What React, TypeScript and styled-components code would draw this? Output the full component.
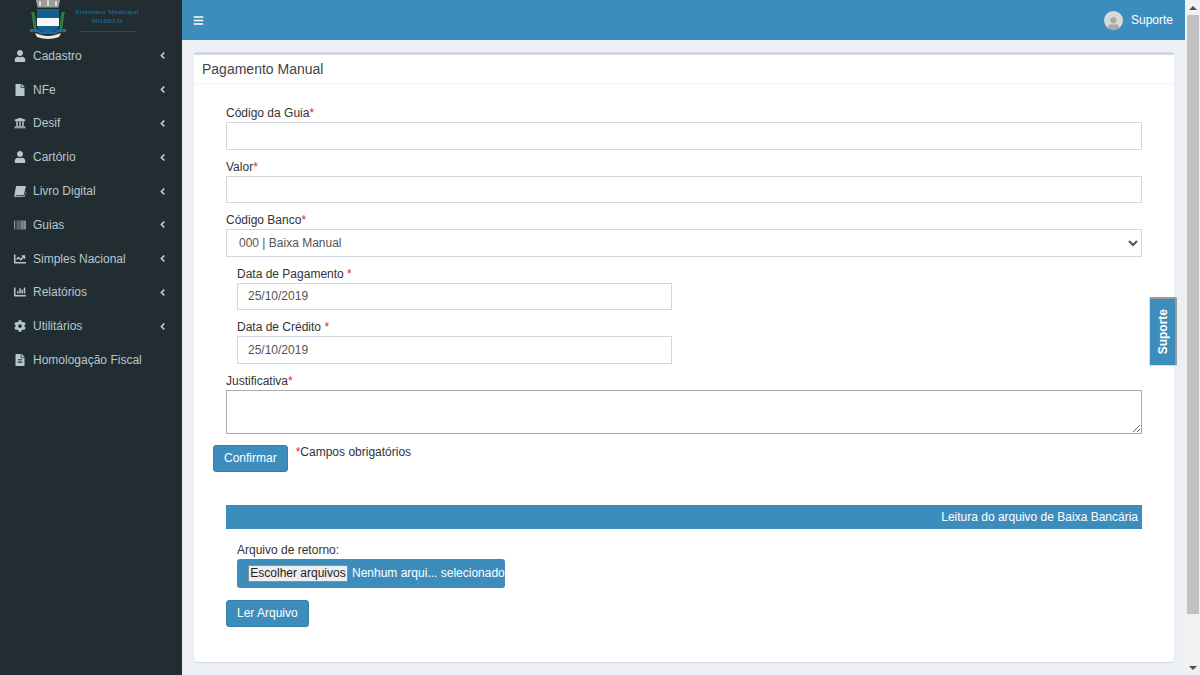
import React from "react";
import styled, { createGlobalStyle } from "styled-components";
import {
  FaAngleLeft,
  FaBarcode,
  FaBars,
  FaChartBar,
  FaChartLine,
  FaCog,
  FaFile,
  FaFileAlt,
  FaUniversity,
  FaUser,
} from "react-icons/fa";

const GlobalStyle = createGlobalStyle`
  html, body {
    margin: 0;
    height: 100%;
    overflow: hidden;
  }

  body {
    font-family: "Liberation Sans", Arial, sans-serif;
    font-size: 12px;
    color: #333;
  }

  * {
    box-sizing: border-box;
  }
`;

const Page = styled.div`
  display: flex;
  width: 1200px;
  height: 675px;
  overflow: hidden;
  background: #ecf0f5;
`;

const Sidebar = styled.aside`
  flex: 0 0 182px;
  background: #222d32;
`;

const Brand = styled.div`
  display: flex;
  height: 39px;
  padding-left: 30px;
  overflow: hidden;
`;

const BrandText = styled.div`
  display: flex;
  flex-direction: column;
  align-items: center;
  width: 72px;
  margin-left: 5px;
  padding-top: 7px;
  font-family: "Liberation Serif", serif;
  font-size: 6.5px;
  line-height: 9px;
  font-weight: 700;
  letter-spacing: 0.25px;
  white-space: nowrap;
  color: #0f6797;
`;

const BrandRule = styled.div`
  width: 55px;
  margin-top: 6px;
  border-top: 1px dotted #17709f;
`;

const Menu = styled.ul`
  margin: 0;
  padding: 0;
  list-style: none;
`;

const MenuItem = styled.li`
  display: flex;
  align-items: center;
  height: 33.8px;
  padding-left: 14px;
  padding-right: 14px;
  color: #b8c7ce;
  font-size: 12px;
`;

const MenuIcon = styled.span`
  display: flex;
  justify-content: center;
  align-items: center;
  flex: 0 0 12px;
  margin-right: 7px;
  font-size: 12px;
`;

const MenuLabel = styled.span`
  flex: 1;
`;

const Main = styled.div`
  flex: 1;
  display: flex;
  flex-direction: column;
  min-width: 0;
`;

const TopBar = styled.header`
  display: flex;
  align-items: center;
  justify-content: space-between;
  flex: 0 0 40px;
  padding: 0 12px 0 11px;
  background: #3c8dbc;
  color: #fff;
`;

const UserMenu = styled.div`
  display: flex;
  align-items: center;
  gap: 8px;
  font-size: 12px;
`;

const Avatar = styled.span`
  display: flex;
  align-items: flex-end;
  justify-content: center;
  width: 19px;
  height: 19px;
  border-radius: 50%;
  overflow: hidden;
  background: #d9d9d9;
  color: #a9a9a9;
`;

const Content = styled.main`
  flex: 1;
  padding: 12px 11px 13px 12px;
`;

const Box = styled.section`
  height: 100%;
  background: #fff;
  border-top: 3px solid #d2d6de;
  border-radius: 3px;
  box-shadow: 0 1px 1px rgba(0, 0, 0, 0.1);
`;

const BoxHeader = styled.h1`
  margin: 0;
  height: 29px;
  padding: 5px 8px 0;
  border-bottom: 1px solid #f4f4f4;
  font-size: 14px;
  line-height: 18px;
  font-weight: 400;
  color: #444;
`;

const Form = styled.form`
  padding: 21px 32px 0 32px;
`;

const Field = styled.div<{ $inset?: boolean; $narrow?: boolean }>`
  margin-bottom: 9px;
  margin-left: ${(p) => (p.$inset ? "11px" : "0")};
  width: ${(p) => (p.$narrow ? "435px" : "916px")};
`;

const Label = styled.label`
  display: block;
  height: 17px;
  line-height: 17px;
  color: #333;
`;

const Required = styled.span`
  color: #e0252b;
`;

const TextInput = styled.input`
  display: block;
  width: 100%;
  height: 27.5px;
  padding: 0 10px;
  border: 1px solid #d2d6de;
  background: #fff;
  font: 12px "Liberation Sans", Arial, sans-serif;
  color: #555;
  outline: none;
`;

const Select = styled.select`
  display: block;
  width: 100%;
  height: 27.5px;
  padding: 0 8px;
  border: 1px solid #d2d6de;
  background: #fff;
  font: 12px "Liberation Sans", Arial, sans-serif;
  color: #555;
  outline: none;
`;

const TextArea = styled.textarea`
  display: block;
  width: 100%;
  height: 44px;
  border: 1px solid #a9a9a9;
  background: #fff;
  outline: none;
`;

const Actions = styled.div`
  display: flex;
  align-items: flex-start;
  gap: 8px;
  margin: 11px 0 0 -13px;
`;

const Button = styled.button`
  height: 27px;
  padding: 0 10px;
  border: 1px solid #367fa9;
  border-radius: 3px;
  background: #3c8dbc;
  color: #fff;
  font: 12px "Liberation Sans", Arial, sans-serif;
`;

const RequiredNote = styled.span`
  padding-top: 0;
  line-height: 14px;
`;

const SectionBar = styled.div`
  width: 916px;
  height: 24px;
  margin-top: 33px;
  padding-right: 4px;
  background: #3c8dbc;
  color: #fff;
  text-align: right;
  font-size: 12px;
  line-height: 25px;
`;

const UploadBlock = styled.div`
  margin: 13px 0 12px 11px;
`;

const UploadBox = styled.div`
  display: flex;
  align-items: center;
  gap: 4px;
  width: 268px;
  height: 29px;
  padding-left: 11px;
  border-radius: 3px;
  background: #3c8dbc;
  color: #fff;
  font-size: 12px;
  white-space: nowrap;
`;

const FileButton = styled.span`
  display: inline-flex;
  align-items: center;
  justify-content: center;
  width: 100px;
  height: 17px;
  border: 1px solid #8f8f8f;
  border-radius: 1px;
  background: #efefef;
  color: #222;
`;

const SupportTab = styled.div`
  position: absolute;
  left: 1149px;
  top: 297px;
  display: flex;
  align-items: center;
  justify-content: center;
  width: 28px;
  height: 69px;
  border-top: 2px solid #999;
  border-right: 2px solid #999;
  border-bottom: 1px solid #ddd;
  border-left: 1px solid #ddd;
  border-radius: 2px;
  background: #3c8dbc;
  color: #fff;
  font-size: 12px;
  font-weight: 700;
`;

const SupportText = styled.span`
  writing-mode: vertical-rl;
  transform: rotate(180deg);
`;

const Scrollbar = styled.div`
  flex: 0 0 15px;
  display: flex;
  flex-direction: column;
  background: #f1f1f1;
`;

const ScrollArrow = styled.div<{ $down?: boolean }>`
  display: flex;
  align-items: center;
  justify-content: center;
  flex: 0 0 15px;
  margin-top: ${(p) => (p.$down ? "auto" : "0")};

  &::before {
    content: "";
    border-left: 4px solid transparent;
    border-right: 4px solid transparent;
    border-bottom: ${(p) => (p.$down ? "0" : "4px solid #505050")};
    border-top: ${(p) => (p.$down ? "4px solid #505050" : "0")};
  }
`;

const ScrollThumb = styled.div`
  height: 599px;
  margin: 0 1px 0 2px;
  background: #c1c1c1;
`;

const BookIcon = () => (
  <svg width="12" height="12" viewBox="0 0 12 12" fill="currentColor">
    <path d="M3.2 1h7.9c.5 0 .8.4.7.9L9.9 9.4c-.1.5-.5.8-1 .8H2c-.5 0-.7.3-.6.6.1.3.4.5.8.5h8.2l1-4.6.5.4-1.3 5.4H2C.9 12.4.2 11.600 .3 10.500L1.900 2.100C2 1.400 2.500 1 3.200 1z" />
  </svg>
);

const Crest = () => (
  <svg width="36" height="39" viewBox="0 0 36 39">
    <path d="M6 0h24l-1.500 7.500h-21z" fill="#9b9b97" />
    <path d="M9 1h2v5H9zM17 0h2v6h-2zM25 1h2v5h-2z" fill="#d8d8d4" />
    <path d="M1 12c2 5 1 10 3 17h2.500c-1-6-.5-12-2.500-17zM35 12c-2 5-1 10-3 17h-2.500c1-6 .5-12 2.500-17z" fill="#2c7f3d" />
    <path d="M7 9h22v15c0 6-6 9-11 10-5-1-11-4-11-10z" fill="#155f92" />
    <path d="M7 18h22v8H7z" fill="#f3f6fb" />
    <path d="M0 29h8l3 3h14l3-3h8v3h-7l-4 2H11l-4-2H0z" fill="#1b6ea3" />
    <path d="M5 33c4 1 8 3 13 3s9-2 13-3l-2 4c-4 1-7 2-11 2s-7-1-11-2z" fill="#e8e8e8" />
  </svg>
);

type MenuEntry = { label: string; icon: React.ReactNode; expandable?: boolean };

const menu: MenuEntry[] = [
  { label: "Cadastro", icon: <FaUser />, expandable: true },
  { label: "NFe", icon: <FaFile />, expandable: true },
  { label: "Desif", icon: <FaUniversity />, expandable: true },
  { label: "Cartório", icon: <FaUser />, expandable: true },
  { label: "Livro Digital", icon: <BookIcon />, expandable: true },
  { label: "Guias", icon: <FaBarcode />, expandable: true },
  { label: "Simples Nacional", icon: <FaChartLine />, expandable: true },
  { label: "Relatórios", icon: <FaChartBar />, expandable: true },
  { label: "Utilitários", icon: <FaCog />, expandable: true },
  { label: "Homologação Fiscal", icon: <FaFileAlt /> },
];

export default function App() {
  return (
    <Page>
      <GlobalStyle />
      <Sidebar>
        <Brand>
          <Crest />
          <BrandText>
            <span>Prefeitura Municipal</span>
            <span>MODELO</span>
            <BrandRule />
          </BrandText>
        </Brand>
        <Menu>
          {menu.map((item) => (
            <MenuItem key={item.label}>
              <MenuIcon>{item.icon}</MenuIcon>
              <MenuLabel>{item.label}</MenuLabel>
              {item.expandable && <FaAngleLeft size={11} />}
            </MenuItem>
          ))}
        </Menu>
      </Sidebar>
      <Main>
        <TopBar>
          <FaBars size={11} />
          <UserMenu>
            <Avatar>
              <FaUser size={13} />
            </Avatar>
            Suporte
          </UserMenu>
        </TopBar>
        <Content>
          <Box>
            <BoxHeader>Pagamento Manual</BoxHeader>
            <Form>
              <Field>
                <Label>
                  Código da Guia<Required>*</Required>
                </Label>
                <TextInput />
              </Field>
              <Field>
                <Label>
                  Valor<Required>*</Required>
                </Label>
                <TextInput />
              </Field>
              <Field>
                <Label>
                  Código Banco<Required>*</Required>
                </Label>
                <Select defaultValue="000">
                  <option value="000">000 | Baixa Manual</option>
                </Select>
              </Field>
              <Field $inset $narrow>
                <Label>
                  Data de Pagamento <Required>*</Required>
                </Label>
                <TextInput defaultValue="25/10/2019" />
              </Field>
              <Field $inset $narrow>
                <Label>
                  Data de Crédito <Required>*</Required>
                </Label>
                <TextInput defaultValue="25/10/2019" />
              </Field>
              <Field>
                <Label>
                  Justificativa<Required>*</Required>
                </Label>
                <TextArea />
              </Field>
              <Actions>
                <Button type="button">Confirmar</Button>
                <RequiredNote>
                  <Required>*</Required>Campos obrigatórios
                </RequiredNote>
              </Actions>
              <SectionBar>Leitura do arquivo de Baixa Bancária</SectionBar>
              <UploadBlock>
                <Label>Arquivo de retorno:</Label>
                <UploadBox>
                  <FileButton>Escolher arquivos</FileButton>
                  Nenhum arqui... selecionado
                </UploadBox>
              </UploadBlock>
              <Button type="button">Ler Arquivo</Button>
            </Form>
          </Box>
        </Content>
      </Main>
      <Scrollbar>
        <ScrollArrow />
        <ScrollThumb />
        <ScrollArrow $down />
      </Scrollbar>
      <SupportTab>
        <SupportText>Suporte</SupportText>
      </SupportTab>
    </Page>
  );
}
